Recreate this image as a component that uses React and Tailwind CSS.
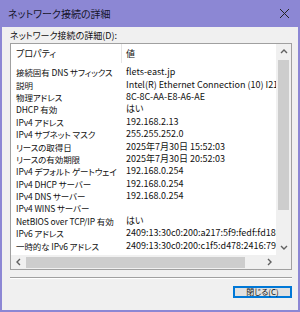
import React from 'react';

const rows = [
  ['接続固有 DNS サフィックス', 'flets-east.jp'],
  ['説明', 'Intel(R) Ethernet Connection (10) I219-V'],
  ['物理アドレス', '8C-8C-AA-E8-A6-AE'],
  ['DHCP 有効', 'はい'],
  ['IPv4 アドレス', '192.168.2.13'],
  ['IPv4 サブネット マスク', '255.255.252.0'],
  ['リースの取得日', '2025年7月30日 15:52:03'],
  ['リースの有効期限', '2025年7月30日 20:52:03'],
  ['IPv4 デフォルト ゲートウェイ', '192.168.0.254'],
  ['IPv4 DHCP サーバー', '192.168.0.254'],
  ['IPv4 DNS サーバー', '192.168.0.254'],
  ['IPv4 WINS サーバー', ''],
  ['NetBIOS over TCP/IP 有効', 'はい'],
  ['IPv6 アドレス', '2409:13:30c0:200:a217:5f9:fedf:fd18c'],
  ['一時的な IPv6 アドレス', '2409:13:30c0:200:c1f5:d478:2416:793'],
];

function Chevron({ dir }) {
  const d = {
    up: 'M2 6 L5 3 L8 6',
    down: 'M2 4 L5 7 L8 4',
    left: 'M6 2 L3 5 L6 8',
    right: 'M4 2 L7 5 L4 8',
  }[dir];
  return (
    <svg width="10" height="10" viewBox="0 0 10 10">
      <path d={d} fill="none" stroke="#606060" strokeWidth="1.4" />
    </svg>
  );
}

export default function App() {
  return (
    <div
      className="w-[300px] h-[312px] bg-[#8c87d4] flex flex-col px-[2px] pb-[2px] text-[#111] [font-feature-settings:'palt']"
      style={{ fontFamily: '"Noto Sans CJK JP", "Liberation Sans", sans-serif' }}
    >
      {/* title bar */}
      <div className="h-[27px] flex items-center justify-between pl-[6px] pr-[8px] shrink-0">
        <span className="text-[10px] leading-[14px] text-[#15152a]">ネットワーク接続の詳細</span>
        <svg width="11" height="11" viewBox="0 0 11 11">
          <path d="M1 1 L10 10 M10 1 L1 10" stroke="#222" strokeWidth="1" />
        </svg>
      </div>

      {/* body */}
      <div className="flex-1 bg-[#f0f0f0] flex flex-col pl-[8px] pr-[6px]">
        <div className="h-[16px] flex items-center text-[9px] leading-[12px] pt-[2px]">ネットワーク接続の詳細(D):</div>

        <div className="h-[227px] border border-[#a0a0a0] bg-white grid grid-cols-[1fr_15px] grid-rows-[1fr_14px]">
          <div className="overflow-hidden flex flex-col text-[9px]">
            <div className="h-[19px] shrink-0 flex items-center leading-[12px]">
              <div className="w-[111px] h-full flex items-center pl-[5px] border-r border-[#e5e5e5]">プロパティ</div>
              <div className="pl-[4px]">値</div>
            </div>
            <div className="pt-[3px] flex flex-col">
              {rows.map(([k, v], i) => (
                <div key={i} className="h-[12.4px] flex items-center whitespace-nowrap leading-[12px]">
                  <div className="w-[111px] shrink-0 pl-[5px] pr-[2px] truncate text-[8.5px] tracking-[-0.1px]">{k}</div>
                  <div className="pl-[4px]">{v}</div>
                </div>
              ))}
            </div>
          </div>

          {/* vertical scrollbar */}
          <div className="bg-[#f0f0f0] flex flex-col items-center">
            <div className="h-[16px] flex items-center justify-center"><Chevron dir="up" /></div>
            <div className="w-[11px] h-[150px] bg-[#cdcdcd]" />
            <div className="flex-1" />
            <div className="h-[16px] flex items-center justify-center"><Chevron dir="down" /></div>
          </div>

          {/* horizontal scrollbar */}
          <div className="bg-[#f0f0f0] flex items-center">
            <div className="w-[15px] flex justify-center"><Chevron dir="left" /></div>
            <div className="w-[219px] h-[11px] bg-[#cdcdcd]" />
            <div className="flex-1" />
            <div className="w-[15px] flex justify-center"><Chevron dir="right" /></div>
          </div>
          <div className="bg-[#f0f0f0]" />
        </div>

        <div className="mt-[7px] border-t border-[#a0a0a0] border-b border-b-white" />

        <div className="flex justify-end mt-[7px]">
          <button className="w-[59px] h-[12px] border-2 border-[#0078d7] bg-[#e1e1e1] text-[8px] flex items-center justify-center leading-[8px]">
            閉じる(C)
          </button>
        </div>
      </div>
    </div>
  );
}
